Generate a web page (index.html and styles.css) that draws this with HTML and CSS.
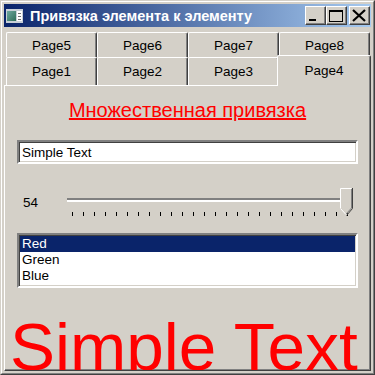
FILE: index.html
```html
<!DOCTYPE html>
<html lang="ru">
<head>
    <meta charset="UTF-8">
    <title>Привязка элемента к элементу</title>
    <link rel="stylesheet" href="styles.css">
</head>
<body>
    <div class="window">
        <div class="frame">
            <div class="titlebar">
                <svg class="app-icon" width="17" height="14" viewBox="0 0 17 14">
                    <defs>
                        <linearGradient id="pic" x1="0" y1="0" x2="1" y2="1">
                            <stop offset="0" stop-color="#6fa8a0"/>
                            <stop offset="1" stop-color="#2e6e58"/>
                        </linearGradient>
                    </defs>
                    <rect x="0" y="0" width="17" height="14" fill="#c8d0d8"/>
                    <rect x="1" y="2" width="9" height="10" fill="url(#pic)"/>
                    <rect x="11" y="2" width="5" height="10" fill="#ffffff"/>
                    <rect x="12" y="4" width="3" height="1" fill="#707070"/>
                    <rect x="12" y="7" width="3" height="1" fill="#707070"/>
                    <rect x="12" y="10" width="3" height="1" fill="#707070"/>
                </svg>
                <span class="title">Привязка элемента к элементу</span>
                <div class="caption-buttons">
                    <div class="cap-btn">
                        <svg width="19" height="17" viewBox="0 0 19 17"><rect x="3" y="12" width="7" height="2" fill="#000"/></svg>
                    </div>
                    <div class="cap-btn">
                        <svg width="19" height="17" viewBox="0 0 19 17"><rect x="2.5" y="3.5" width="13" height="11" fill="none" stroke="#000"/><rect x="2" y="3" width="14" height="2" fill="#000"/></svg>
                    </div>
                    <div class="cap-btn close">
                        <svg width="19" height="17" viewBox="0 0 19 17"><path d="M3 3 L15 14 M15 3 L3 14" stroke="#000" stroke-width="2.2"/></svg>
                    </div>
                </div>
            </div>

            <div class="tabs">
                <div class="tab-row">
                    <div class="tab">Page5</div>
                    <div class="tab">Page6</div>
                    <div class="tab">Page7</div>
                    <div class="tab">Page8</div>
                </div>
                <div class="tab-row second">
                    <div class="tab">Page1</div>
                    <div class="tab">Page2</div>
                    <div class="tab">Page3</div>
                    <div class="tab selected">Page4</div>
                </div>
            </div>

            <div class="panel">
                <div class="heading">Множественная привязка</div>
                <div class="textbox">Simple Text</div>

                <div class="slider-row">
                    <div class="slider-value">54</div>
                    <div class="slider">
                        <div class="track"></div>
                        <div class="ticks"></div>
                        <svg class="thumb" width="13" height="28" viewBox="0 0 13 28">
                            <path d="M0 0 H12 V20 L6 27 L0 20 Z" fill="#d4d0c8"/>
                            <path d="M0.5 20 V0.5 H11.5" fill="none" stroke="#fff"/>
                            <path d="M12.5 0 V20.5 L6.5 27.5" fill="none" stroke="#404040"/>
                            <path d="M11.5 1 V20 L6 26" fill="none" stroke="#808080"/>
                            <path d="M0.5 20.5 L6 26.5" fill="none" stroke="#fff"/>
                        </svg>
                    </div>
                </div>

                <div class="listbox">
                    <div class="list-item selected">Red</div>
                    <div class="list-item">Green</div>
                    <div class="list-item">Blue</div>
                </div>

                <div class="big-text">Simple Text</div>
            </div>
        </div>
    </div>
</body>
</html>
```

FILE: styles.css
```css
body {
    margin: 0;
    background: #d4d0c8;
    font-family: "Liberation Sans", Arial, sans-serif;
    font-size: 13.5px;
    color: #000;
}
.window {
    width: 375px;
    height: 375px;
    box-sizing: border-box;
    border: 1px solid;
    border-color: #d4d0c8 #404040 #404040 #d4d0c8;
    background: #d4d0c8;
    overflow: hidden;
}
.frame {
    height: 100%;
    box-sizing: border-box;
    border: 1px solid;
    border-color: #ffffff #808080 #808080 #ffffff;
    padding: 2px;
    display: flex;
    flex-direction: column;
}
.titlebar {
    height: 23px;
    flex: none;
    display: flex;
    align-items: center;
    background: linear-gradient(to right, #0a246a, #a6caf0);
    padding: 0 1px 0 2px;
}
.app-icon {
    flex: none;
    margin-top: 1px;
}
.title {
    margin-left: 7px;
    color: #fff;
    font-weight: bold;
    font-size: 14.5px;
    white-space: nowrap;
}
.caption-buttons {
    margin-left: auto;
    display: flex;
}
.cap-btn {
    width: 19px;
    height: 17px;
    border: 1px solid;
    border-color: #ffffff #404040 #404040 #ffffff;
    box-shadow: inset -1px -1px #808080;
    background: #d4d0c8;
}
.cap-btn svg {
    display: block;
}
.cap-btn.close {
    margin-left: 2px;
}
.tabs {
    margin: 5px 1px 0 2px;
    flex: none;
}
.tab-row {
    display: grid;
    grid-template-columns: repeat(4, 1fr);
    height: 25px;
}
.tab-row.second {
    height: 28px;
}
.tab {
    display: flex;
    align-items: center;
    justify-content: center;
    border-left: 1px solid #fff;
    border-top: 1px solid #fff;
    border-right: 1px solid #404040;
    box-shadow: inset -1px 0 #808080;
    border-top-left-radius: 2px;
    border-top-right-radius: 2px;
}
.tab-row.second .tab {
    padding-bottom: 1px;
}
.tab.selected {
    position: relative;
    z-index: 1;
    margin: -2px -1px -1px -2px;
    background: #d4d0c8;
    padding-bottom: 0;
}
.panel {
    flex: 1;
    min-height: 0;
    border: 1px solid;
    border-color: #ffffff #404040 #404040 #ffffff;
    box-shadow: inset -1px -1px #808080;
    padding: 0 12px;
    overflow: hidden;
}
.heading {
    margin-top: 13px;
    text-align: center;
    color: #ff0000;
    font-size: 20px;
    line-height: 22px;
    text-decoration: underline;
}
.textbox {
    margin-top: 19px;
    height: 20px;
    border: 2px solid;
    border-color: #808080 #ffffff #ffffff #808080;
    box-shadow: inset 1px 1px #404040, inset -1px -1px #d4d0c8;
    background: #fff;
    padding: 0 3px;
    line-height: 21px;
    white-space: nowrap;
}
.slider-row {
    margin-top: 24px;
    display: flex;
    height: 30px;
}
.slider-value {
    width: 50px;
    padding-left: 6px;
    box-sizing: border-box;
    margin-top: 7px;
    line-height: 16px;
}
.slider {
    position: relative;
    width: 286px;
}
.track {
    margin-top: 10px;
    height: 0;
    border-top: 2px solid;
    border-bottom: 2px solid;
    border-color: #808080 #d4d0c8 #ffffff;
    box-shadow: inset 0 1px #404040;
    width: 285px;
}
.ticks {
    margin: 10px 0 0 5px;
    width: 277px;
    height: 4px;
    background: repeating-linear-gradient(to right, #000 0, #000 1px, transparent 1px, transparent 11px);
}
.thumb {
    position: absolute;
    left: 273px;
    top: 0;
}
.listbox {
    margin-top: 15px;
    height: 50px;
    border: 2px solid;
    border-color: #808080 #ffffff #ffffff #808080;
    box-shadow: inset 1px 1px #404040, inset -1px -1px #d4d0c8;
    background: #fff;
    padding: 1px 1px 0 1px;
}
.list-item {
    height: 16px;
    line-height: 16px;
    padding-left: 2px;
}
.list-item.selected {
    background: #0a246a;
    color: #fff;
}
.big-text {
    margin: 26px -12px 0 -7px;
    color: #ff0000;
    font-size: 67.5px;
    line-height: 66px;
    white-space: nowrap;
}
```
